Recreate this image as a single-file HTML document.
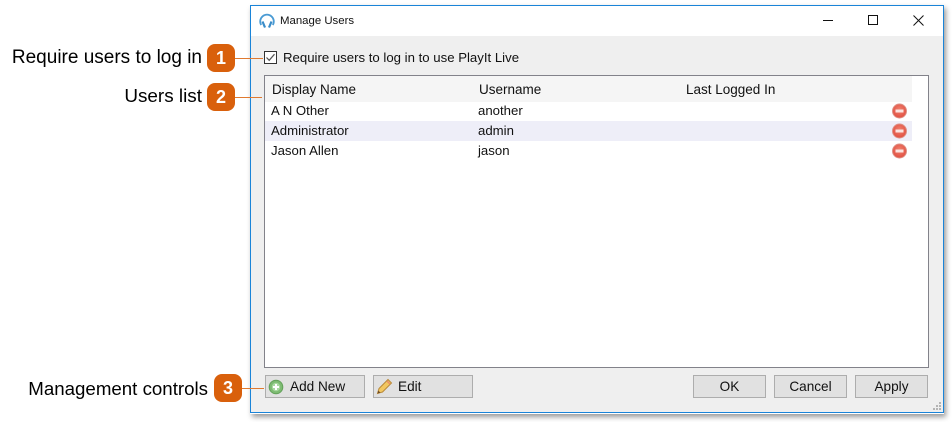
<!DOCTYPE html>
<html><head><meta charset="utf-8">
<style>
html,body{margin:0;padding:0;background:#fff}
#p{position:relative;width:952px;height:422px;overflow:hidden;background:#fff;font-family:"Liberation Sans",sans-serif;color:#000}
#p div{position:absolute;box-sizing:border-box}
.t{font-size:13.2px;line-height:16px;white-space:nowrap;color:#111}
.h{font-size:13.5px}
.lab{font-size:18.9px;line-height:22px;white-space:nowrap;color:#000;text-align:right;right:750px}
.bd{width:28px;height:28px;background:#d9600c;border-radius:8px;color:#fff;font-weight:bold;font-size:18px;line-height:28px;text-align:center}
.ln{height:1px;background:#e07a30}
.btn{height:23px;background:#e1e1e1;border:1px solid #adadad;font-size:13.6px;line-height:21px;text-align:center;color:#111}
</style></head><body>
<div id="p">
<div style="left:250px;top:5px;width:694px;height:409px;box-shadow:2px 3px 5px rgba(0,0,0,.4)"></div>
<div style="left:250px;top:5px;width:694px;height:408px;background:#efefef;border:1px solid #1a84d8"></div>
<div style="left:251px;top:6px;width:692px;height:30px;background:#fff"></div>
<svg style="position:absolute;left:258px;top:11px" width="18" height="19" viewBox="0 0 18 19"><path d="M3.2 14 A6.8 6.8 0 1 1 14.8 14" fill="none" stroke="#4a9bd4" stroke-width="1.8"/><path d="M4.5 10.5 L7 16.5 M13.5 10.5 L11 16.5" stroke="#3a8cc8" stroke-width="2.2" fill="none"/></svg>
<div class="t" style="left:280px;top:13px;font-size:11.4px">Manage Users</div>
<div style="left:823px;top:20px;width:10px;height:1px;background:#111"></div>
<div style="left:868px;top:15px;width:10px;height:10px;border:1px solid #111"></div>
<svg style="position:absolute;left:913px;top:15px" width="11" height="11" viewBox="0 0 11 11"><path d="M.5 .5 L10.5 10.5 M10.5 .5 L.5 10.5" stroke="#111" stroke-width="1"/></svg>

<div class="lab" style="top:47px;font-size:19px">Require users to log in</div>
<div class="bd" style="left:207px;top:44px">1</div>
<div class="ln" style="left:235px;top:58px;width:28px"></div>
<div class="lab" style="top:86px">Users list</div>
<div class="bd" style="left:207px;top:83px">2</div>
<div class="ln" style="left:235px;top:97px;width:27px"></div>
<div class="lab" style="top:378px;right:744px;font-size:18.7px">Management controls</div>
<div class="bd" style="left:214px;top:374px">3</div>
<div class="ln" style="left:242px;top:388px;width:22px"></div>

<div style="left:264px;top:51px;width:13px;height:13px;background:#fff;border:1px solid #333"></div>
<svg style="position:absolute;left:264px;top:51px" width="13" height="13" viewBox="0 0 13 13"><path d="M2.5 6.5 L5.2 9.3 L10.5 3.2" fill="none" stroke="#555" stroke-width="1.2"/></svg>
<div class="t" style="left:283px;top:50px">Require users to log in to use PlayIt Live</div>

<div style="left:264px;top:75px;width:665px;height:293px;background:#fff;border:1px solid #82828a"></div>
<div style="left:265px;top:76px;width:647px;height:26px;background:#f5f5f5"></div>
<div style="left:265px;top:121px;width:647px;height:20px;background:#eeeef8"></div>
<div class="t h" style="left:272px;top:82px">Display Name</div>
<div class="t h" style="left:479px;top:82px">Username</div>
<div class="t h" style="left:686px;top:82px">Last Logged In</div>
<div class="t" style="left:271px;top:103px">A N Other</div>
<div class="t" style="left:478px;top:103px">another</div>
<div class="t" style="left:271px;top:123px">Administrator</div>
<div class="t" style="left:478px;top:123px">admin</div>
<div class="t" style="left:271px;top:143px">Jason Allen</div>
<div class="t" style="left:478px;top:143px">jason</div>
<svg style="position:absolute;left:892px;top:103px" width="16" height="56" viewBox="0 0 16 56">
<defs><radialGradient id="rg" cx=".5" cy=".4" r=".6"><stop offset="0" stop-color="#f0806f"/><stop offset="1" stop-color="#e04f40"/></radialGradient></defs>
<circle cx="7.5" cy="8" r="7" fill="url(#rg)" stroke="#dd8f84"/><rect x="3.5" y="6.5" width="8" height="3" fill="#fbe4e0"/>
<circle cx="7.5" cy="28" r="7" fill="url(#rg)" stroke="#dd8f84"/><rect x="3.5" y="26.5" width="8" height="3" fill="#fbe4e0"/>
<circle cx="7.5" cy="48" r="7" fill="url(#rg)" stroke="#dd8f84"/><rect x="3.5" y="46.5" width="8" height="3" fill="#fbe4e0"/>
</svg>

<div class="btn" style="left:265px;top:375px;width:100px;text-align:left;padding-left:24px">Add New</div>
<svg style="position:absolute;left:268px;top:379px" width="16" height="16" viewBox="0 0 16 16"><circle cx="8" cy="8" r="6.8" fill="#7dbb72" stroke="#62a058"/><circle cx="8" cy="8" r="4.2" fill="#a9d9a0"/><path d="M5 8 H11 M8 5 V11" stroke="#fff" stroke-width="2"/></svg>
<div class="btn" style="left:373px;top:375px;width:100px;text-align:left;padding-left:24px">Edit</div>
<svg style="position:absolute;left:376px;top:378px" width="17" height="17" viewBox="0 0 17 17"><path d="M1.5 15.5 L3 10.5 L12 1.5 L15.5 5 L6.5 14 Z" fill="#f2c760" stroke="#b98a3a"/><path d="M1.5 15.5 L2.4 12.6 L4.4 14.6 Z" fill="#6b4a26"/><path d="M11 3 L14 6" stroke="#e88f6a" stroke-width="1.5"/></svg>
<div class="btn" style="left:693px;top:375px;width:73px">OK</div>
<div class="btn" style="left:774px;top:375px;width:73px">Cancel</div>
<div class="btn" style="left:855px;top:375px;width:73px">Apply</div>
<svg style="position:absolute;left:932px;top:401px" width="10" height="10" viewBox="0 0 10 10" fill="#b4b4b4"><rect x="7" y="1" width="2" height="2"/><rect x="4" y="4" width="2" height="2"/><rect x="7" y="4" width="2" height="2"/><rect x="1" y="7" width="2" height="2"/><rect x="4" y="7" width="2" height="2"/><rect x="7" y="7" width="2" height="2"/></svg>
</div>
</body></html>
